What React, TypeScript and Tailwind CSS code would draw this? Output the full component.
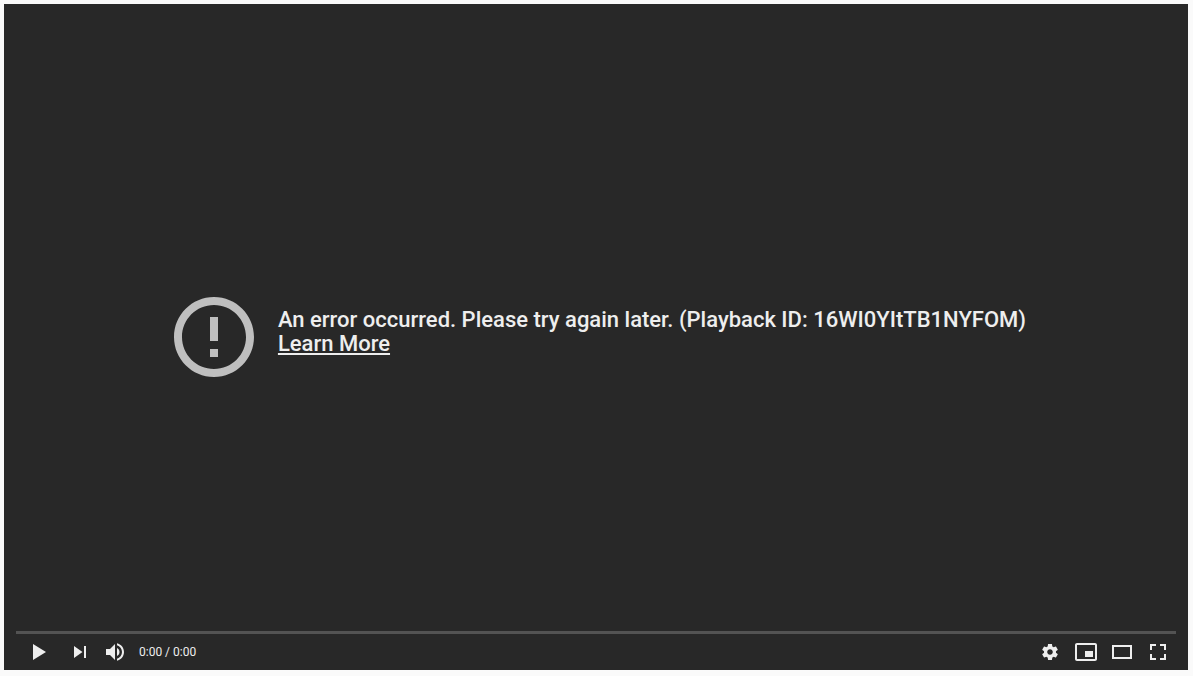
import React from "react";

type IconButtonProps = {
  label: string;
  path: string;
  className?: string;
};

function IconButton({ label, path, className = "w-9" }: IconButtonProps) {
  return (
    <button type="button" aria-label={label} className={`h-9 shrink-0 cursor-pointer ${className}`}>
      <svg viewBox="0 0 36 36" className="h-full w-full fill-[#eeeeee]" aria-hidden="true">
        <path fillRule="evenodd" d={path} />
      </svg>
    </button>
  );
}

const icons = {
  play: "M12 26 L18.5 22 L18.5 14 L12 10 Z M18.5 22 L25 18 L25 18 L18.5 14 Z",
  next: "M12 24l8.5-6L12 12v12zM22 12v12h2V12h-2z",
  volume:
    "M8 21h4l5 5V10l-5 5H8v6zm11-7v8c1.5-.7 2.5-2.200 2.500-4s-1-3.300-2.500-4zM19 11.290c2.890.86 5 3.540 5 6.710s-2.110 5.850-5 6.710v2.060c4.010-.91 7-4.490 7-8.770s-2.990-7.860-7-8.770v2.060z",
  settings:
    "M23.940 18.780c.03-.25.050-.51.050-.78s-.02-.52-.05-.78l1.680-1.320c.15-.12.190-.33.090-.51l-1.600-2.760c-.09-.17-.31-.24-.48-.17l-1.990.8c-.41-.32-.86-.58-1.350-.78l-.3-2.120c-.02-.19-.19-.33-.39-.33h-3.200c-.2 0-.36.140-.39.330l-.3 2.120c-.48.2-.93.470-1.350.780l-1.990-.8c-.18-.07-.39 0-.48.170l-1.600 2.760c-.1.170-.05.390.090.510l1.680 1.320c-.03.250-.05.520-.05.780s.02.520.05.780l-1.680 1.320c-.15.120-.19.330-.09.510l1.600 2.760c.09.170.31.240.48.170l1.990-.8c.41.320.86.580 1.350.780l.3 2.120c.02.190.19.330.39.330h3.200c.2 0 .36-.14.390-.33l.3-2.120c.48-.2.930-.47 1.350-.78l1.990.8c.18.070.39 0 .48-.17l1.600-2.760c.09-.17.050-.39-.09-.51l-1.680-1.320zM18 20.800c-1.540 0-2.800-1.250-2.800-2.800s1.250-2.800 2.800-2.800 2.800 1.250 2.800 2.800-1.250 2.800-2.800 2.800z",
  miniplayer:
    "M25 17h-8v6h8v-6zm4 8V10.980C29 9.880 28.100 9 27 9H9c-1.100 0-2 .88-2 1.980V25c0 1.100.9 2 2 2h18c1.100 0 2-.9 2-2zm-2 .02H9V10.970h18v14.050z",
  theater: "M28 11v14H8V11h20zM26 13H10v10h16V13z",
  fullscreen:
    "M10 16h2v-4h4v-2h-6v6zM20 10v2h4v4h2v-6h-6zM24 24h-4v2h6v-6h-2v4zM12 20h-2v6h6v-2h-4v-4z",
};

export default function App() {
  return (
    <main className="flex h-screen bg-[#fafafa] pt-1 pr-[5px] pb-1.5 pl-1 font-['Roboto',sans-serif] text-[#eeeeee]">
      <section aria-label="Video player" className="flex flex-1 flex-col bg-[#282828]">
        <div className="flex flex-1 items-center justify-center pt-[38px]">
          <div role="alert" className="flex items-center gap-4">
            <svg viewBox="0 0 24 24" className="size-24 shrink-0 fill-[#bfbfbf]" aria-hidden="true">
              <path d="M11 15h2v2h-2zm0-8h2v6h-2zm.990-5C6.470 2 2 6.480 2 12s4.470 10 9.990 10C17.520 22 22 17.520 22 12S17.520 2 11.990 2zM12 20c-4.420 0-8-3.580-8-8s3.580-8 8-8 8 3.580 8 8-3.580 8-8 8z" />
            </svg>
            <p className="pb-2.5 text-[22px] leading-6 font-medium">
              An error occurred. Please try again later. (Playback ID: 16WI0YItTB1NYFOM)
              <br />
              <a href="#learn-more" className="underline">Learn More</a>
            </p>
          </div>
        </div>
        <footer className="px-3">
          <div role="progressbar" aria-label="Playback position" aria-valuenow={0} className="h-[3px] bg-[#535353]" />
          <div className="flex h-9 items-center">
            <IconButton label="Play" path={icons.play} className="w-[46px]" />
            <IconButton label="Next" path={icons.next} />
            <IconButton label="Mute" path={icons.volume} />
            <span className="px-[5px] text-[12px]">0:00 / 0:00</span>
            <div className="ml-auto flex">
              <IconButton label="Settings" path={icons.settings} />
              <IconButton label="Miniplayer" path={icons.miniplayer} />
              <IconButton label="Theater mode" path={icons.theater} />
              <IconButton label="Full screen" path={icons.fullscreen} />
            </div>
          </div>
        </footer>
      </section>
    </main>
  );
}
